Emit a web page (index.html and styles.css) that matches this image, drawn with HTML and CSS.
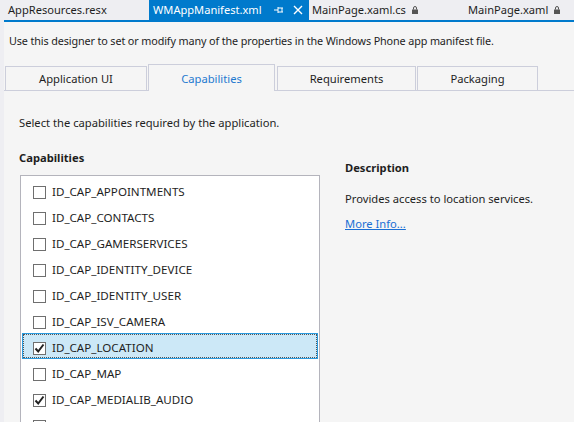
FILE: index.html
```html
<!DOCTYPE html>
<html lang="en">
<head>
    <meta charset="UTF-8">
    <meta name="viewport" content="width=device-width, initial-scale=1.0">
    <title>WMAppManifest.xml</title>
    <link rel="stylesheet" href="styles.css">
</head>
<body>
    <div class="doc-tabs">
        <div class="doc-tab tab-resources">AppResources.resx</div>
        <div class="doc-tab active">
            <span>WMAppManifest.xml</span>
            <svg class="pin" width="10" height="10" viewBox="0 0 10 10">
                <path d="M0 5h4M4 2v6M4 3h5M4 7h5M8 3v4" stroke="#fff" stroke-width="1" fill="none"/>
            </svg>
            <svg class="close" width="10" height="10" viewBox="0 0 10 10">
                <path d="M1 1l8 8M9 1l-8 8" stroke="#fff" stroke-width="1.4" fill="none"/>
            </svg>
        </div>
        <div class="doc-tab tab-code">
            <span>MainPage.xaml.cs</span>
            <svg class="lock" width="6" height="8" viewBox="0 0 6 8">
                <path d="M1.5 3.5V2a1.5 1.5 0 0 1 3 0v1.5" stroke="#555" fill="none"/>
                <rect x="0" y="3.5" width="6" height="4.5" fill="#555"/>
            </svg>
        </div>
        <div class="doc-tab tab-xaml">
            <span>MainPage.xaml</span>
            <svg class="lock" width="6" height="8" viewBox="0 0 6 8">
                <path d="M1.5 3.5V2a1.5 1.5 0 0 1 3 0v1.5" stroke="#555" fill="none"/>
                <rect x="0" y="3.5" width="6" height="4.5" fill="#555"/>
            </svg>
        </div>
    </div>
    <div class="doc-rule"></div>

    <div class="designer">
        <p class="intro">Use this designer to set or modify many of the properties in the Windows Phone app manifest file.</p>

        <div class="page-tabs">
            <div class="page-tab tab-appui">Application UI</div>
            <div class="page-tab active tab-caps">Capabilities</div>
            <div class="page-tab tab-req">Requirements</div>
            <div class="page-tab tab-pack">Packaging</div>
        </div>

        <div class="panel">
            <p class="hint">Select the capabilities required by the application.</p>

            <div class="columns">
                <div class="caps-column">
                    <h2>Capabilities</h2>
                    <ul class="cap-list">
                        <li><span class="box"></span>ID_CAP_APPOINTMENTS</li>
                        <li><span class="box"></span>ID_CAP_CONTACTS</li>
                        <li><span class="box"></span>ID_CAP_GAMERSERVICES</li>
                        <li><span class="box"></span>ID_CAP_IDENTITY_DEVICE</li>
                        <li><span class="box"></span>ID_CAP_IDENTITY_USER</li>
                        <li><span class="box"></span>ID_CAP_ISV_CAMERA</li>
                        <li class="selected"><span class="box checked"><svg width="11" height="11" viewBox="0 0 11 11"><path d="M1.5 5.5l2.7 3 5.3-7" stroke="#222" stroke-width="2" fill="none"/></svg></span>ID_CAP_LOCATION</li>
                        <li><span class="box"></span>ID_CAP_MAP</li>
                        <li><span class="box checked"><svg width="11" height="11" viewBox="0 0 11 11"><path d="M1.5 5.5l2.7 3 5.3-7" stroke="#222" stroke-width="2" fill="none"/></svg></span>ID_CAP_MEDIALIB_AUDIO</li>
                        <li><span class="box"></span>ID_CAP_MEDIALIB_PHOTO</li>
                    </ul>
                </div>

                <div class="desc-column">
                    <h2>Description</h2>
                    <p class="desc-text">Provides access to location services.</p>
                    <a class="more" href="#">More Info...</a>
                </div>
            </div>
        </div>
    </div>
</body>
</html>
```

FILE: styles.css
```css
* {
    margin: 0;
    padding: 0;
    box-sizing: border-box;
    font-family: 'Noto Sans', 'Open Sans', sans-serif;
}

body {
    background-color: #eeeef2;
    color: #1e1e1e;
    font-size: 11.2px;
    line-height: 16px;
    height: 422px;
    overflow: hidden;
}

/* document tab well */

.doc-tabs {
    display: flex;
    height: 20px;
    font-size: 11.1px;
}

.doc-tab {
    display: flex;
    align-items: center;
    height: 20px;
    white-space: nowrap;
}

.tab-resources {
    width: 149px;
    padding-left: 8px;
}

.doc-tab.active {
    width: 160px;
    background-color: #007acc;
    color: #fff;
    padding-left: 4px;
}

.doc-tab.active .pin {
    margin-left: auto;
}

.doc-tab.active .close {
    margin: 0 6px 0 9px;
}

.tab-code {
    width: 159px;
    padding-left: 3px;
}

.tab-xaml {
    flex: 1;
}

.lock {
    margin-left: 6px;
}

.doc-rule {
    height: 2px;
    margin-left: 4px;
    background-color: #007acc;
}

/* designer surface */

.designer {
    margin-left: 4px;
    background-color: #f5f5f5;
    height: 400px;
}

.intro {
    padding: 11px 0 0 5px;
    font-size: 10.8px;
    letter-spacing: -0.12px;
}

.page-tabs {
    display: flex;
    align-items: flex-end;
    margin-top: 15px;
    padding-left: 1px;
    border-bottom: 1px solid #cccedb;
}

.page-tab {
    height: 24px;
    line-height: 24px;
    text-align: center;
    border: 1px solid #cccedb;
    border-bottom: none;
    margin-right: 1px;
    background-color: #f5f5f5;
}

.page-tab.active {
    height: 27px;
    padding-top: 2px;
    margin-bottom: -1px;
    color: #1e79d0;
}

.tab-appui { width: 142px; }
.tab-caps { width: 127px; }
.tab-req { width: 139px; margin-left: 1px; }
.tab-pack { width: 121px; }

.panel {
    padding: 24px 0 0 15px;
}

.columns {
    display: flex;
    margin-top: 19px;
}

.columns h2 {
    font-size: 11.2px;
    font-weight: bold;
}

.caps-column {
    width: 301px;
}

.cap-list {
    list-style: none;
    margin: 9px 0 0 1px;
    padding: 1px 1px 0 1px;
    border: 1px solid #b4b4bc;
    border-bottom: none;
    background-color: #fff;
    height: 260px;
    font-size: 11.6px;
}

.cap-list li {
    display: flex;
    align-items: center;
    height: 26px;
    padding: 4px 0 0 10px;
    border: 1px solid transparent;
}

.cap-list li.selected {
    background-color: #cce8f7;
    border-color: #2a9be0;
    outline: 1px dotted #555;
    outline-offset: -2px;
}

.box {
    display: flex;
    align-items: center;
    justify-content: center;
    width: 13px;
    height: 13px;
    border: 1px solid #6f6f6f;
    background-color: #fff;
    margin-right: 6px;
}

.desc-column {
    margin-left: 25px;
    padding-top: 10px;
}

.desc-text {
    margin-top: 15px;
}

.more {
    display: inline-block;
    margin-top: 9px;
    color: #1a6fd4;
    text-decoration: underline;
}
```
